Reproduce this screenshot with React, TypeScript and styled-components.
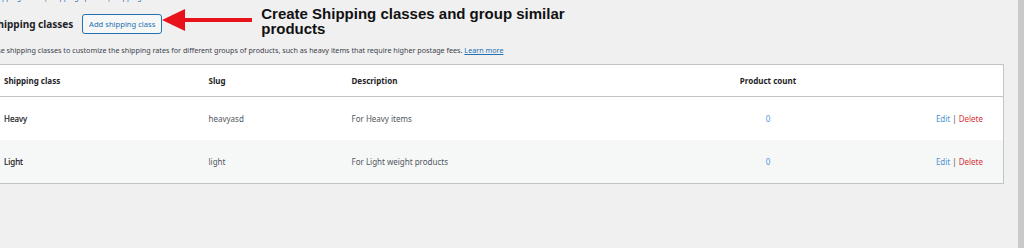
import styled, { createGlobalStyle } from "styled-components";

const GlobalStyle = createGlobalStyle`
  html, body {
    margin: 0;
    padding: 0;
    background: #f0f0f1;
    overflow: hidden;
  }
  body {
    font-family: "Noto Sans", "DejaVu Sans", sans-serif;
    color: #3c434a;
  }
`;

const Page = styled.div`
  display: grid;
  grid-template-columns: 1fr 6px;
  height: 248px;
  width: 1024px;
  overflow: hidden;
`;

const Main = styled.div`
  margin-left: -8px;
  padding-right: 14px;
  min-width: 0;
`;

const Scrollbar = styled.div`
  background: #c9c9c9;
`;

const SubNav = styled.div`
  margin-top: -7px;
  height: 10px;
  line-height: 10px;
  font-size: 7px;
  color: #2271b1;
  white-space: nowrap;
`;

const HeaderRow = styled.div`
  display: flex;
  align-items: center;
  height: 26px;
  margin-top: 8px;
`;

const Title = styled.h2`
  margin: 0 9px 0 0;
  font-size: 10px;
  font-weight: 700;
  color: #1d2327;
`;

const AddButton = styled.button`
  height: 20px;
  width: 80px;
  padding: 0;
  border: 1px solid #2271b1;
  border-radius: 3px;
  background: #f6f7f7;
  color: #2271b1;
  font-family: inherit;
  font-size: 7.6px;
`;

const Callout = styled.div`
  display: flex;
  align-items: flex-start;
  align-self: flex-start;
  margin-top: -5px;
`;

const Arrow = styled.svg`
  flex: none;
  margin-top: 2px;
  margin-right: 9px;
`;

const CalloutText = styled.div`
  width: 320px;
  font-family: "Liberation Sans", Arial, sans-serif;
  font-size: 15px;
  font-weight: 700;
  line-height: 15px;
  color: #111;
`;

const Intro = styled.p`
  margin: 8px 0 0;
  font-size: 7.2px;
  line-height: 10px;
  color: #3c434a;
  white-space: nowrap;

  a {
    color: #2271b1;
    text-decoration: underline;
  }
`;

const Table = styled.table`
  width: 100%;
  margin-top: 9px;
  border-collapse: collapse;
  border: 1px solid #c3c4c7;
  background: #fff;
  table-layout: fixed;
  font-size: 8px;
`;

const Th = styled.th<{ $align?: string }>`
  height: 31px;
  padding: 0 11px;
  text-align: ${(p) => p.$align || "left"};
  font-weight: 700;
  color: #1d2327;
  border-bottom: 1px solid #c3c4c7;
`;

const Tr = styled.tr<{ $alt?: boolean }>`
  background: ${(p) => (p.$alt ? "#f6f7f7" : "#fff")};
`;

const Td = styled.td<{ $align?: string }>`
  height: 43px;
  padding: 0 ${(p) => (p.$align === "right" ? "20px" : "11px")};
  text-align: ${(p) => p.$align || "left"};
  color: #50575e;
`;

const ClassName = styled.span`
  font-weight: 400;
  color: #1d2327;
  -webkit-text-stroke: 0.2px #1d2327;
`;

const Count = styled.span`
  color: #4f94d4;
`;

const EditLink = styled.span`
  color: #4f94d4;
`;

const DeleteLink = styled.span`
  color: #d63638;
`;

const Sep = styled.span`
  color: #50575e;
  margin: 0 2px;
`;

const classes = [
  { name: "Heavy", slug: "heavyasd", description: "For Heavy items", count: 0 },
  { name: "Light", slug: "light", description: "For Light weight products", count: 0 },
];

export default function App() {
  return (
    <>
      <GlobalStyle />
      <Page>
        <Main>
          <SubNav>Shipping zones | Shipping options | Shipping classes</SubNav>
          <HeaderRow>
            <Title>Shipping classes</Title>
            <AddButton>Add shipping class</AddButton>
            <Callout>
              <Arrow width="90" height="24" viewBox="0 0 90 24">
                <polygon points="0,12 23,1 23,10 90,10 90,14 23,14 23,23" fill="#e8121b" />
              </Arrow>
              <CalloutText>Create Shipping classes and group similar products</CalloutText>
            </Callout>
          </HeaderRow>
          <Intro>
            Use shipping classes to customize the shipping rates for different groups of products, such as heavy
            items that require higher postage fees. <a>Learn more</a>
          </Intro>
          <Table>
            <colgroup>
              <col style={{ width: 205 }} />
              <col style={{ width: 143 }} />
              <col style={{ width: 340 }} />
              <col style={{ width: 175 }} />
              <col />
            </colgroup>
            <thead>
              <tr>
                <Th>Shipping class</Th>
                <Th>Slug</Th>
                <Th>Description</Th>
                <Th $align="center">Product count</Th>
                <Th />
              </tr>
            </thead>
            <tbody>
              {classes.map((c, i) => (
                <Tr key={c.slug} $alt={i % 2 === 1}>
                  <Td>
                    <ClassName>{c.name}</ClassName>
                  </Td>
                  <Td>{c.slug}</Td>
                  <Td>{c.description}</Td>
                  <Td $align="center">
                    <Count>{c.count}</Count>
                  </Td>
                  <Td $align="right">
                    <EditLink>Edit</EditLink>
                    <Sep>|</Sep>
                    <DeleteLink>Delete</DeleteLink>
                  </Td>
                </Tr>
              ))}
            </tbody>
          </Table>
        </Main>
        <Scrollbar />
      </Page>
    </>
  );
}
